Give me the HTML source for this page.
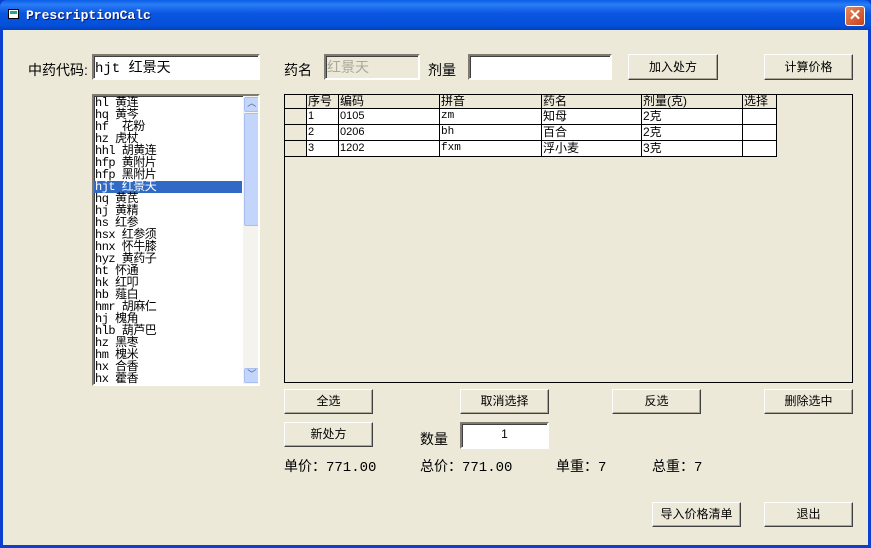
<!DOCTYPE html>
<html><head><meta charset="utf-8"><style>
*{margin:0;padding:0;box-sizing:border-box}
body{width:871px;height:548px;overflow:hidden;background:#0a3fd0;font-family:"Liberation Sans","Noto Sans CJK SC","WenQuanYi Zen Hei",sans-serif;font-size:12px;color:#000;position:relative}
.title{position:absolute;left:0;top:0;width:871px;height:30px;background:linear-gradient(#0a5fe8 0%,#2a7cf5 15%,#0a56e2 45%,#0450d8 85%,#0340c0 100%);border-radius:7px 7px 0 0}
.title span{position:absolute;left:26px;top:8px;color:#fff;font-family:"Liberation Mono",monospace;font-weight:bold;font-size:13px;text-shadow:1px 1px #0a1c70}
.ico{position:absolute;left:8px;top:9px;width:11px;height:10px;background:#fff;border:1px solid #000}
.ico:after{content:"";position:absolute;left:1px;top:1px;width:7px;height:3px;background:#2a8;}
.close{position:absolute;left:845px;top:6px;width:20px;height:20px;border:1px solid #fff;border-radius:3px;background:linear-gradient(135deg,#e88860,#c8401a);color:#fff;font-weight:bold;font-size:15px;text-align:center;line-height:18px}
.client{position:absolute;left:3px;top:30px;width:865px;height:515px;background:#ECE9D8}
.lbl{position:absolute;font-size:14px;white-space:nowrap}
.inp{position:absolute;background:#fff;border:2px solid;border-color:#7f7b70 #fff #fff #7f7b70;box-shadow:inset 1px 1px #404040}
.btn{position:absolute;background:#ECE9D8;border:1px solid;border-color:#fff #404040 #404040 #fff;box-shadow:inset -1px -1px #aca899;text-align:center;font-size:12px}
.list{position:absolute;left:92px;top:94px;width:168px;height:292px;background:#fff;border:2px solid;border-color:#7f7b70 #fff #fff #7f7b70;box-shadow:inset 1px 1px #404040;overflow:hidden;padding-top:1px}
.list div{height:12px;line-height:12px;font-size:12px;padding-left:1px;white-space:pre;font-family:"Liberation Mono","Noto Sans CJK SC",monospace;width:148px;letter-spacing:-0.5px}
.sel{background:#316ac5;color:#fff}
.grid{position:absolute;left:284px;top:94px;width:569px;height:289px;background:#ECE9D8;border:1px solid #000}
table{border-collapse:collapse;position:absolute;left:-1px;top:-1px;font-size:11px;table-layout:fixed;width:492px}
td{border:1px solid #000;height:16px;line-height:14px;padding:0 1px;vertical-align:top;white-space:nowrap;overflow:hidden}
td.h{background:#ECE9D8}
td.w{background:#fff}
tr.hd td{height:14px;font-size:12px;line-height:12px}
</style></head><body>
<div class="title"><div class="ico"></div><span>PrescriptionCalc</span><div class="close">✕</div></div>
<div class="client"></div>
<div class="lbl" style="left:28px;top:60px">中药代码:</div>
<div class="inp" style="left:92px;top:54px;width:168px;height:26px"><span style="position:absolute;left:1px;top:1px;font-size:14px;font-family:'Liberation Mono','Noto Sans CJK SC',monospace">hjt 红景天</span></div>
<div class="lbl" style="left:284px;top:60px">药名</div>
<div class="inp" style="left:324px;top:54px;width:96px;height:26px;background:#ECE9D8"><span style="position:absolute;left:1px;top:1px;font-size:14px;color:#aca899">红景天</span></div>
<div class="lbl" style="left:428px;top:60px">剂量</div>
<div class="inp" style="left:468px;top:54px;width:144px;height:26px"></div>
<div class="btn" style="left:628px;top:54px;width:90px;height:26px;line-height:24px">加入处方</div>
<div class="btn" style="left:764px;top:54px;width:89px;height:26px;line-height:24px">计算价格</div>
<div class="list">
<div>hl 黄连</div><div>hq 黄芩</div><div>hf  花粉</div><div>hz 虎杖</div><div>hhl 胡黄连</div><div>hfp 黄附片</div><div>hfp 黑附片</div><div class="sel">hjt 红景天</div><div>hq 黄芪</div><div>hj 黄精</div><div>hs 红参</div><div>hsx 红参须</div><div>hnx 怀牛膝</div><div>hyz 黄药子</div><div>ht 怀通</div><div>hk 红叩</div><div>hb 薤白</div><div>hmr 胡麻仁</div><div>hj 槐角</div><div>hlb 葫芦巴</div><div>hz 黑枣</div><div>hm 槐米</div><div>hx 合香</div><div>hx 藿香</div>
<div style="position:absolute;left:149px;top:0;width:16px;height:288px;background:#f4f3ee;padding:0"></div>
<div style="position:absolute;left:150px;top:1px;width:15px;height:15px;background:#c4d5fb;border:1px solid #a8bdf0;border-radius:2px;color:#4d6185;font-size:9px;text-align:center;line-height:13px;padding:0">︿</div>
<div style="position:absolute;left:150px;top:17px;width:15px;height:113px;background:#c4d5fb;border:1px solid #a8bdf0;border-radius:2px;padding:0"></div>
<div style="position:absolute;left:150px;top:272px;width:15px;height:15px;background:#c4d5fb;border:1px solid #a8bdf0;border-radius:2px;color:#4d6185;font-size:9px;text-align:center;line-height:13px;padding:0">﹀</div>
</div>
<div class="grid">
<table>
<colgroup><col style="width:22px"><col style="width:32px"><col style="width:101px"><col style="width:102px"><col style="width:100px"><col style="width:101px"><col style="width:34px"></colgroup>
<tr class="hd"><td class="h"></td><td class="h">序号</td><td class="h">编码</td><td class="h">拼音</td><td class="h">药名</td><td class="h">剂量(克)</td><td class="h">选择</td></tr>
<tr><td class="h"></td><td class="w">1</td><td class="w">0105</td><td class="w" style="font-family:'Liberation Mono',monospace">zm</td><td class="w" style="font-size:12px">知母</td><td class="w" style="font-size:12px">2克</td><td class="w"></td></tr>
<tr><td class="h"></td><td class="w">2</td><td class="w">0206</td><td class="w" style="font-family:'Liberation Mono',monospace">bh</td><td class="w" style="font-size:12px">百合</td><td class="w" style="font-size:12px">2克</td><td class="w"></td></tr>
<tr><td class="h"></td><td class="w">3</td><td class="w">1202</td><td class="w" style="font-family:'Liberation Mono',monospace">fxm</td><td class="w" style="font-size:12px">浮小麦</td><td class="w" style="font-size:12px">3克</td><td class="w"></td></tr>
</table>
</div>
<div class="btn" style="left:284px;top:389px;width:89px;height:25px;line-height:23px">全选</div>
<div class="btn" style="left:460px;top:389px;width:89px;height:25px;line-height:23px">取消选择</div>
<div class="btn" style="left:612px;top:389px;width:89px;height:25px;line-height:23px">反选</div>
<div class="btn" style="left:764px;top:389px;width:89px;height:25px;line-height:23px">删除选中</div>
<div class="btn" style="left:284px;top:422px;width:89px;height:25px;line-height:23px">新处方</div>
<div class="lbl" style="left:420px;top:429px">数量</div>
<div class="inp" style="left:460px;top:422px;width:89px;height:27px;text-align:center;line-height:20px;font-size:12px">1</div>
<div class="lbl" style="left:284px;top:456px">单价：<span style="font-family:'Liberation Mono',monospace">771.00</span></div>
<div class="lbl" style="left:420px;top:456px">总价：<span style="font-family:'Liberation Mono',monospace">771.00</span></div>
<div class="lbl" style="left:556px;top:456px">单重：<span style="font-family:'Liberation Mono',monospace">7</span></div>
<div class="lbl" style="left:652px;top:456px">总重：<span style="font-family:'Liberation Mono',monospace">7</span></div>
<div class="btn" style="left:652px;top:502px;width:89px;height:25px;line-height:23px">导入价格清单</div>
<div class="btn" style="left:764px;top:502px;width:89px;height:25px;line-height:23px">退出</div>
</body></html>
